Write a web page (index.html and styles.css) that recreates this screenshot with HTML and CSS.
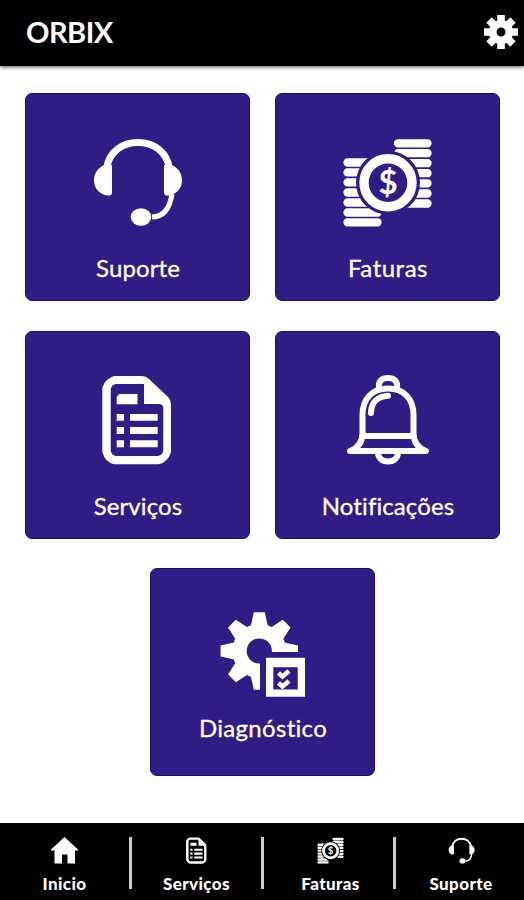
FILE: index.html
```
<!DOCTYPE html>
<html lang="pt-BR">
<head>
    <meta charset="UTF-8">
    <meta name="viewport" content="width=device-width, initial-scale=1.0">
    <title>ORBIX</title>
    <link rel="stylesheet" href="styles.css">
</head>
<body>
    <!-- Ícones usados nos cartões e no menu inferior -->
    <svg class="sprite" width="0" height="0">
        <symbol id="suporte" viewBox="0 0 91 90">
            <path d="M14.500 32C17 14 31 5.500 46 5.500S75 14 77.500 32" fill="none" stroke="currentColor" stroke-width="7"/>
            <path d="M20 28V56Q20 59 15 58.500C7 57 2 51 2 43.500C2 36 6 31 12 28ZM72 28V56Q72 59 77 58.500C85 57 90 51 90 43.500C90 36 86 31 80 28Z" fill="currentColor"/>
            <path d="M80 57C78 70 73 80 60 80" fill="none" stroke="currentColor" stroke-width="5"/>
            <ellipse cx="49" cy="80" rx="10.300" ry="8.800" fill="currentColor"/>
        </symbol>
        <symbol id="faturas" viewBox="0 0 91 90">
            <path d="M56 6.300H85.500M56 16.200H85.500M56 26.200H85.500M56 36.200H85.500M56 46.300H85.500M56 56.500H85.500M56 66.500H85.500M5.500 25.500H35.500M5.500 35.400H35.500M5.500 45.400H35.500M5.500 55.500H35.500M5.500 65.500H35.500M5.500 75.500H35.500M5.500 85.300H35.500" stroke="currentColor" stroke-width="8.300" stroke-linecap="round"/>
            <circle class="fundo" cx="46" cy="45.700" r="32"/>
            <circle cx="46" cy="45.700" r="24" fill="none" stroke="currentColor" stroke-width="9.400"/>
        </symbol>
        <symbol id="servicos" viewBox="0 0 91 90">
            <path fill="currentColor" fill-rule="evenodd" d="M22 1H50Q54 1 57 4L76 22Q79 25 79 29V77Q76 87 67 89.300H22Q13 87 10.300 77V13Q13 4 22 1ZM24 9Q19 10 18.700 15V75Q19 80 24 81H66Q71 80 71.300 75V33Q71 29 67 29H52V9Z"/>
            <path fill="currentColor" d="M27 19H45.500V29.300H24.700V22ZM24.700 39H32V45.700H24.700ZM38 39H65.700V45.700H38ZM24.700 52H32V59H24.700ZM38 52H65.700V59H38ZM24.700 65.300H32V72.300H24.700ZM38 65.300H65.700V72.300H38Z"/>
        </symbol>
        <symbol id="notificacoes" viewBox="0 0 91 90">
            <g fill="none" stroke="currentColor" stroke-width="6" stroke-linejoin="round" stroke-linecap="round">
                <path d="M37 13C36 6 40 3 46 3S56 6 55 13"/>
                <path d="M8 76C16 73 20.500 67 20.500 58V40C20.500 24 30 13.500 46 13.500S71.500 24 71.500 40V58C71.500 67 76 73 84 76Z"/>
                <path d="M21 61H71M36 77C36 83 40 86.500 46 86.500S56 83 56 77"/>
                <path d="M29 38C29 28 35 21.500 46 20.700"/>
            </g>
        </symbol>
        <symbol id="diagnostico" viewBox="0 0 91 90">
            <g fill="currentColor">
                <circle cx="42.300" cy="39" r="27"/>
                <path id="dente" d="M36.800 .3H47.800L51 15H33.600Z"/>
                <use href="#dente" transform="rotate(45 42.300 39)"/>
                <use href="#dente" transform="rotate(90 42.300 39)"/>
                <use href="#dente" transform="rotate(180 42.300 39)"/>
                <use href="#dente" transform="rotate(225 42.300 39)"/>
                <use href="#dente" transform="rotate(270 42.300 39)"/>
                <use href="#dente" transform="rotate(315 42.300 39)"/>
            </g>
            <circle class="fundo" cx="42.300" cy="39" r="12.600"/>
            <path class="fundo" d="M43 40H91V90H43Z"/>
            <path fill="currentColor" fill-rule="evenodd" d="M49 45.700H88V84.700H49ZM56.300 55.300V77.500H80.700V55.300Z"/>
            <path d="M61.500 61L65.500 64.500L72 59M61.500 71L65.500 74.500L72 69" fill="none" stroke="currentColor" stroke-width="4.500"/>
        </symbol>
        <symbol id="inicio" viewBox="0 0 27 27">
            <path fill="currentColor" d="M13.500 0L27 12.500V13.500H24V26.500H16.500V17.500H11V26.500H3.500V13.500H0V12.500Z"/>
        </symbol>
        <symbol id="config" viewBox="0 0 34 34">
            <g fill="none" stroke="currentColor">
                <circle cx="17" cy="17" r="8.300" stroke-width="7.600"/>
                <path d="M17 0V8M17 26V34M0 17H8M26 17H34M5 5L10 10M24 24L29 29M5 29L10 24M24 10L29 5" stroke-width="7.600"/>
            </g>
        </symbol>
    </svg>

    <header class="topo">
        <h1>ORBIX</h1>
        <svg class="config"><use href="#config"/></svg>
    </header>

    <main class="cartoes">
        <a class="cartao"><svg><use href="#suporte"/></svg><span>Suporte</span></a>
        <a class="cartao faturas">
            <svg viewBox="0 0 91 90"><use href="#faturas"/><text class="cifrao" x="46" y="57" text-anchor="middle">$</text></svg>
            <span>Faturas</span>
        </a>
        <a class="cartao"><svg><use href="#servicos"/></svg><span>Serviços</span></a>
        <a class="cartao"><svg><use href="#notificacoes"/></svg><span>Notificações</span></a>
        <a class="cartao diagnostico"><svg><use href="#diagnostico"/></svg><span>Diagnóstico</span></a>
    </main>

    <nav class="menu">
        <a><svg><use href="#inicio"/></svg><span>Inicio</span></a>
        <a><svg><use href="#servicos"/></svg><span>Serviços</span></a>
        <a class="faturas">
            <svg viewBox="0 0 91 90"><use href="#faturas"/><text class="cifrao" x="46" y="57" text-anchor="middle">$</text></svg>
            <span>Faturas</span>
        </a>
        <a><svg><use href="#suporte"/></svg><span>Suporte</span></a>
    </nav>
</body>
</html>
```
FILE: styles.css
```
* {
    box-sizing: border-box;
}
body {
    --fundo: #2f1c85;
    font-family: Lato, "Open Sans", sans-serif;
    font-variant-ligatures: none;
    background-color: #fff;
    margin: 0;
    height: 900px;
    display: flex;
    flex-direction: column;
    overflow: hidden;
}
.sprite {
    position: absolute;
}
.fundo {
    fill: var(--fundo);
}
.cifrao {
    font: bold 33px Lato, sans-serif;
    letter-spacing: 0;
    fill: currentColor;
}
.topo {
    height: 66px;
    flex: none;
    display: flex;
    align-items: center;
    justify-content: space-between;
    padding: 0 6px 2px 26px;
    background-color: #000;
    color: #fff;
    box-shadow: 0 1px 4px rgba(0, 0, 0, 0.7);
}
h1 {
    margin: 0;
    font-size: 29px;
    font-weight: bold;
    line-height: 62px;
    letter-spacing: -0.5px;
}
.config {
    width: 34px;
    height: 34px;
}
.cartoes {
    flex: 1;
    display: flex;
    flex-wrap: wrap;
    justify-content: center;
    align-content: flex-start;
    gap: 29.500px 25px;
    padding: 27px 24px 0 25px;
}
.cartao {
    width: 225px;
    height: 208px;
    display: flex;
    flex-direction: column;
    align-items: center;
    padding-top: 43px;
    border: 1px solid #1c0b79;
    border-radius: 7px;
    background-color: var(--fundo);
    color: #fff;
    font-size: 24px;
    line-height: 30px;
    letter-spacing: 0.1px;
    -webkit-text-stroke: 0.3px #fff;
}
.cartao svg {
    width: 91px;
    height: 90px;
    margin-bottom: 26px;
    -webkit-text-stroke: 0;
}
.cartao span {
    padding-left: 1px;
}
.cartao.faturas {
    letter-spacing: 0.5px;
}
.cartao.diagnostico {
    letter-spacing: 0.3px;
}
.diagnostico svg {
    margin-bottom: 11px;
}
.menu {
    --fundo: #000;
    height: 77px;
    flex: none;
    display: grid;
    grid-template-columns: 129px 132px 132px 131px;
    padding-top: 14px;
    background-color: #000;
    color: #fff;
}
.menu a {
    height: 52px;
    display: flex;
    flex-direction: column;
    align-items: center;
    font-size: 17px;
    font-weight: 900;
    line-height: 20px;
    letter-spacing: 0.4px;
}
.menu a + a {
    border-left: 3px solid #ccc;
}
.menu .faturas {
    padding-left: 4px;
}
.menu a:last-child {
    padding-left: 2px;
}
.menu svg {
    width: 27px;
    height: 27px;
    flex: none;
    margin-bottom: 10px;
}
```
